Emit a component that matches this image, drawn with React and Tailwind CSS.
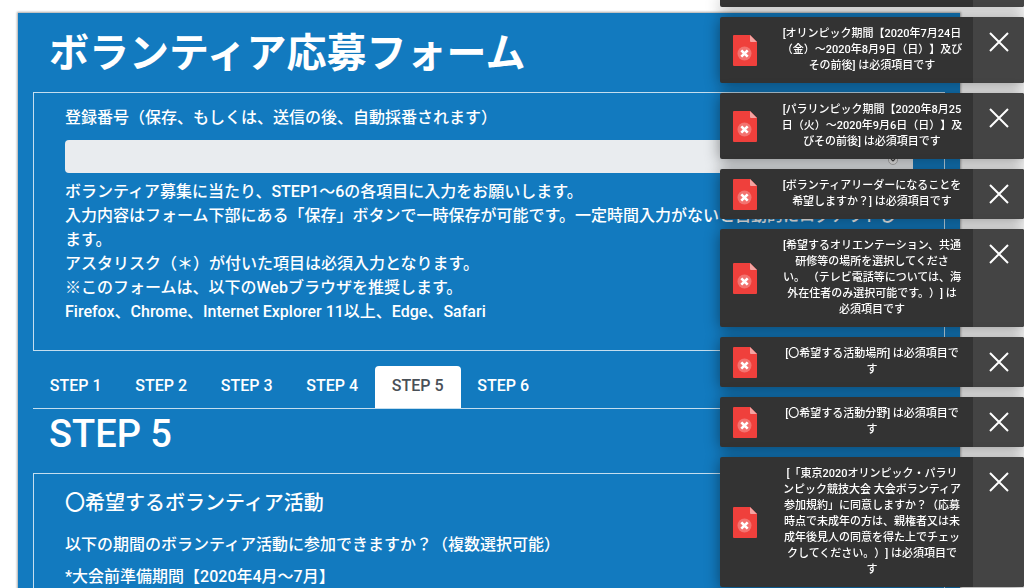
import React, { useState } from 'react';

const steps = [1, 2, 3, 4, 5, 6];

const initialErrors = [
  { id: 'olympic', lines: ['[オリンピック期間【2020年7月24日', '（金）～2020年8月9日（日）】及び', 'その前後] は必須項目です'] },
  { id: 'paralympic', lines: ['[パラリンピック期間【2020年8月25', '日（火）～2020年9月6日（日）】及', 'びその前後] は必須項目です'] },
  { id: 'leader', lines: ['[ボランティアリーダーになることを', '希望しますか？] は必須項目です'] },
  {
    id: 'orientation',
    lines: [
      '[希望するオリエンテーション、共通',
      '研修等の場所を選択してくださ',
      'い。 （テレビ電話等については、海',
      '外在住者のみ選択可能です。）] は',
      '必須項目です',
    ],
  },
  { id: 'place', lines: ['[〇希望する活動場所] は必須項目で', 'す'] },
  { id: 'field', lines: ['[〇希望する活動分野] は必須項目で', 'す'] },
  {
    id: 'terms',
    lines: [
      '[「東京2020オリンピック・パラリ',
      'ンピック競技大会 大会ボランティア',
      '参加規約」に同意しますか？（応募',
      '時点で未成年の方は、親権者又は未',
      '成年後見人の同意を得た上でチェッ',
      'クしてください。）] は必須項目で',
      'す',
    ],
  },
];

const ErrorFileIcon = () => (
  <svg className="w-6 h-[31px] shrink-0" viewBox="0 0 24 31" aria-hidden="true">
    <path d="M1 0H17l7 7v23a1 1 0 0 1-1 1H1a1 1 0 0 1-1-1V1a1 1 0 0 1 1-1z" fill="#ef403c" />
    <path d="M17 0l7 7h-6a1 1 0 0 1-1-1z" fill="#f5a3a1" />
    <circle cx="11.500" cy="18.500" r="7" fill="#f37370" />
    <path d="M8.300 15.300l6.400 6.400M14.700 15.300l-6.400 6.400" stroke="#fff" strokeWidth="2.600" />
  </svg>
);

const Toast = ({ lines, onClose }) => (
  <div role="alert" className="flex rounded-[2px] overflow-hidden bg-[#333333] shadow-[0_2px_15px_rgba(0,0,0,0.45)]">
    <div className="flex flex-1 items-center pl-[13px]">
      <ErrorFileIcon />
      <p className="flex-1 pl-6 pr-[10px] py-[9px] text-[11px] leading-4 font-medium text-center text-white whitespace-nowrap">
        {lines.map((line) => (
          <span key={line} className="block">{line}</span>
        ))}
      </p>
    </div>
    <button type="button" aria-label="閉じる" onClick={onClose} className="w-[51px] flex justify-center items-start pt-[15px] bg-[#444444]">
      <svg className="w-5 h-5" viewBox="0 0 20 20" aria-hidden="true">
        <path d="M1 1l18 18M19 1L1 19" stroke="#fff" strokeWidth="2" />
      </svg>
    </button>
  </div>
);

const App = () => {
  const [activeStep, setActiveStep] = useState(5);
  const [errors, setErrors] = useState(initialErrors);

  const dismiss = (id) => setErrors(errors.filter((error) => error.id !== id));

  return (
    <div
      lang="ja"
      className="min-h-screen flex flex-col bg-white pt-[13px] pl-[18px] pr-16 text-white font-medium text-base leading-6 font-[Roboto,'Noto_Sans_CJK_JP',sans-serif] [text-spacing-trim:space-all]"
    >
      <main className="flex-1 flex flex-col bg-[#127abf] px-[15px] shadow-[0_0_2px_1px_rgba(0,0,0,0.35)]">
        <h1 className="pl-4 pt-[17px] text-[40px] leading-[48px] font-bold">ボランティア応募フォーム</h1>

        {/* Registration number and notes */}
        <section className="mt-[14px] border border-[#c4deef] px-[31px] pt-[13px] pb-[26px]">
          <label htmlFor="entry-number" className="block">登録番号（保存、もしくは、送信の後、自動採番されます）</label>
          <div className="relative mt-[10px]">
            <input id="entry-number" type="text" readOnly className="block w-full h-[33px] rounded-[4px] bg-[#e9ecef] px-3 text-[#495057]" />
            <svg className="absolute right-[15px] top-[9px] w-[10px] h-4" viewBox="0 0 10 16" aria-hidden="true">
              <rect x="0.500" y="0.500" width="9" height="15" rx="4.500" fill="#f4f4f4" stroke="#b5b5b5" />
              <path d="M3 6l2-2 2 2M3 10l2 2 2-2" fill="none" stroke="#444" strokeWidth="1.200" />
            </svg>
          </div>
          <div className="mt-[7px]">
            <p>ボランティア募集に当たり、STEP1～6の各項目に入力をお願いします。</p>
            <p>
              入力内容はフォーム下部にある「保存」ボタンで一時保存が可能です。一定時間入力がないと自動的にログアウトし
              <br />
              ます。
            </p>
            <p>アスタリスク（＊）が付いた項目は必須入力となります。</p>
            <p>※このフォームは、以下のWebブラウザを推奨します。</p>
            <p>Firefox、Chrome、Internet Explorer 11以上、Edge、Safari</p>
          </div>
        </section>

        {/* Step tabs */}
        <nav className="mt-[15px] border-b border-[#c4deef]">
          <div role="tablist" className="grid grid-cols-6 w-[513px]">
            {steps.map((step) => (
              <button
                key={step}
                type="button"
                role="tab"
                aria-selected={step === activeStep}
                onClick={() => setActiveStep(step)}
                className={
                  step === activeStep
                    ? 'h-[42px] pb-[3px] rounded-t-[4px] bg-white text-[#495057]'
                    : 'h-[42px] pb-[3px] rounded-t-[4px]'
                }
              >
                STEP {step}
              </button>
            ))}
          </div>
        </nav>

        <h2 className="pl-4 text-[38px] leading-[50px]">STEP {activeStep}</h2>

        <section className="mt-[14px] flex-1 border border-b-0 border-[#c4deef] px-[31px] pt-[14px]">
          <h3 className="text-xl leading-[30px]">〇希望するボランティア活動</h3>
          <p className="mt-[15px]">以下の期間のボランティア活動に参加できますか？（複数選択可能）</p>
          <p className="mt-2">*大会前準備期間【2020年4月～7月】</p>
        </section>
      </main>

      {/* Validation messages */}
      <aside className="fixed top-0 right-0 w-[304px] max-h-screen flex flex-col gap-[10px]">
        <div className="flex h-[7px] shrink-0 rounded-b-[2px] overflow-hidden bg-[#333333] shadow-[0_2px_15px_rgba(0,0,0,0.45)]">
          <div className="ml-auto w-[51px] bg-[#444444]"></div>
        </div>
        {errors.map((error) => (
          <Toast key={error.id} lines={error.lines} onClose={() => dismiss(error.id)} />
        ))}
      </aside>
    </div>
  );
};

export default App;
